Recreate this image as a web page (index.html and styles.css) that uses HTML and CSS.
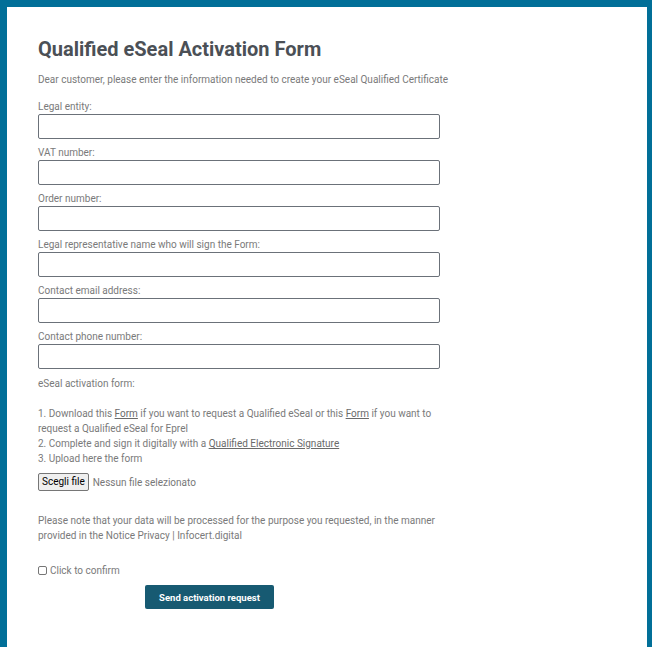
FILE: index.html
```html
<!DOCTYPE html>
<html>
<head>
<meta charset="utf-8">
<link rel="stylesheet" href="styles.css">
</head>
<body>
<div class="panel">
  <h1 class="title">Qualified eSeal Activation Form</h1>
  <p class="intro">Dear customer, please enter the information needed to create your eSeal Qualified Certificate</p>
  <form class="form">
    <label class="field"><span class="label">Legal entity:</span><input class="input" type="text"></label>
    <label class="field"><span class="label">VAT number:</span><input class="input" type="text"></label>
    <label class="field"><span class="label">Order number:</span><input class="input" type="text"></label>
    <label class="field"><span class="label">Legal representative name who will sign the Form:</span><input class="input" type="text"></label>
    <label class="field"><span class="label">Contact email address:</span><input class="input" type="text"></label>
    <label class="field"><span class="label">Contact phone number:</span><input class="input" type="text"></label>
    <div class="steps">
      <p class="line">eSeal activation form:</p>
      <p class="line blank">&nbsp;</p>
      <p class="line">1. Download this <a class="link" href="#">Form</a> if you want to request a Qualified eSeal or this <a class="link" href="#">Form</a> if you want to request a Qualified eSeal for Eprel</p>
      <p class="line">2. Complete and sign it digitally with a <a class="link" href="#">Qualified Electronic Signature</a></p>
      <p class="line">3. Upload here the form</p>
    </div>
    <div class="file">
      <span class="file-btn">Scegli file</span>
      <span class="file-text">Nessun file selezionato</span>
    </div>
    <p class="note">Please note that your data will be processed for the purpose you requested, in the manner provided in the Notice Privacy | Infocert.digital</p>
    <label class="confirm"><input class="check" type="checkbox"><span>Click to confirm</span></label>
    <div class="actions">
      <button class="submit" type="button">Send activation request</button>
    </div>
  </form>
</div>
</body>
</html>
```
FILE: styles.css
```css
* { box-sizing: border-box; }
html, body { margin: 0; padding: 0; }
body {
  background: #016f98;
  font-family: Roboto, "Liberation Sans", Arial, sans-serif;
  padding: 7px 5px 0 7px;
  height: 647px;
  overflow: hidden;
}
.panel {
  background: #fff;
  height: 640px;
  padding: 29px 31px 0 31px;
}
.title {
  margin: 0;
  font-size: 20px;
  line-height: 26px;
  font-weight: 700;
  color: #4b5056;
}
.intro {
  margin: 10px 0 0 0;
  font-size: 10px;
  line-height: 15px;
  color: #7a7a7a;
}
.form {
  width: 402px;
  margin-top: 12px;
}
.field {
  display: flex;
  flex-direction: column;
  margin-bottom: 6px;
}
.label {
  font-size: 10px;
  line-height: 15px;
  color: #7a7a7a;
}
.input {
  height: 25px;
  width: 402px;
  border: 1px solid #6b7179;
  border-radius: 2px;
  background: #fff;
  margin: 0;
}
.steps { padding-top: 1px; }
.line {
  margin: 0;
  font-size: 10px;
  line-height: 15px;
  color: #7a7a7a;
}
.link {
  color: #6a6a6a;
  text-decoration: underline;
}
.file {
  display: flex;
  align-items: center;
  gap: 4px;
  margin-top: 7px;
  height: 18px;
}
.file-btn {
  display: inline-block;
  height: 18px;
  line-height: 16px;
  padding: 0 3px;
  border: 1px solid #767676;
  border-radius: 2px;
  background: #efefef;
  color: #000;
  font-size: 10px;
}
.file-text {
  font-size: 10px;
  color: #777;
}
.note {
  margin: 22px 0 0 0;
  font-size: 10px;
  line-height: 15px;
  color: #7a7a7a;
}
.confirm {
  display: flex;
  align-items: center;
  gap: 3px;
  margin-top: 20px;
  height: 15px;
  font-size: 10px;
  color: #7a7a7a;
}
.check {
  appearance: none;
  -webkit-appearance: none;
  width: 9px;
  height: 9px;
  margin: 0;
  border: 1px solid #767676;
  border-radius: 2px;
  background: #fff;
}
.actions {
  margin-top: 7px;
  padding-left: 107px;
}
.submit {
  width: 129px;
  height: 24px;
  border: 0;
  border-radius: 2px;
  background: #175a72;
  color: #fff;
  font-family: Roboto, "Liberation Sans", Arial, sans-serif;
  font-weight: 700;
  font-size: 9.5px;
}
```
